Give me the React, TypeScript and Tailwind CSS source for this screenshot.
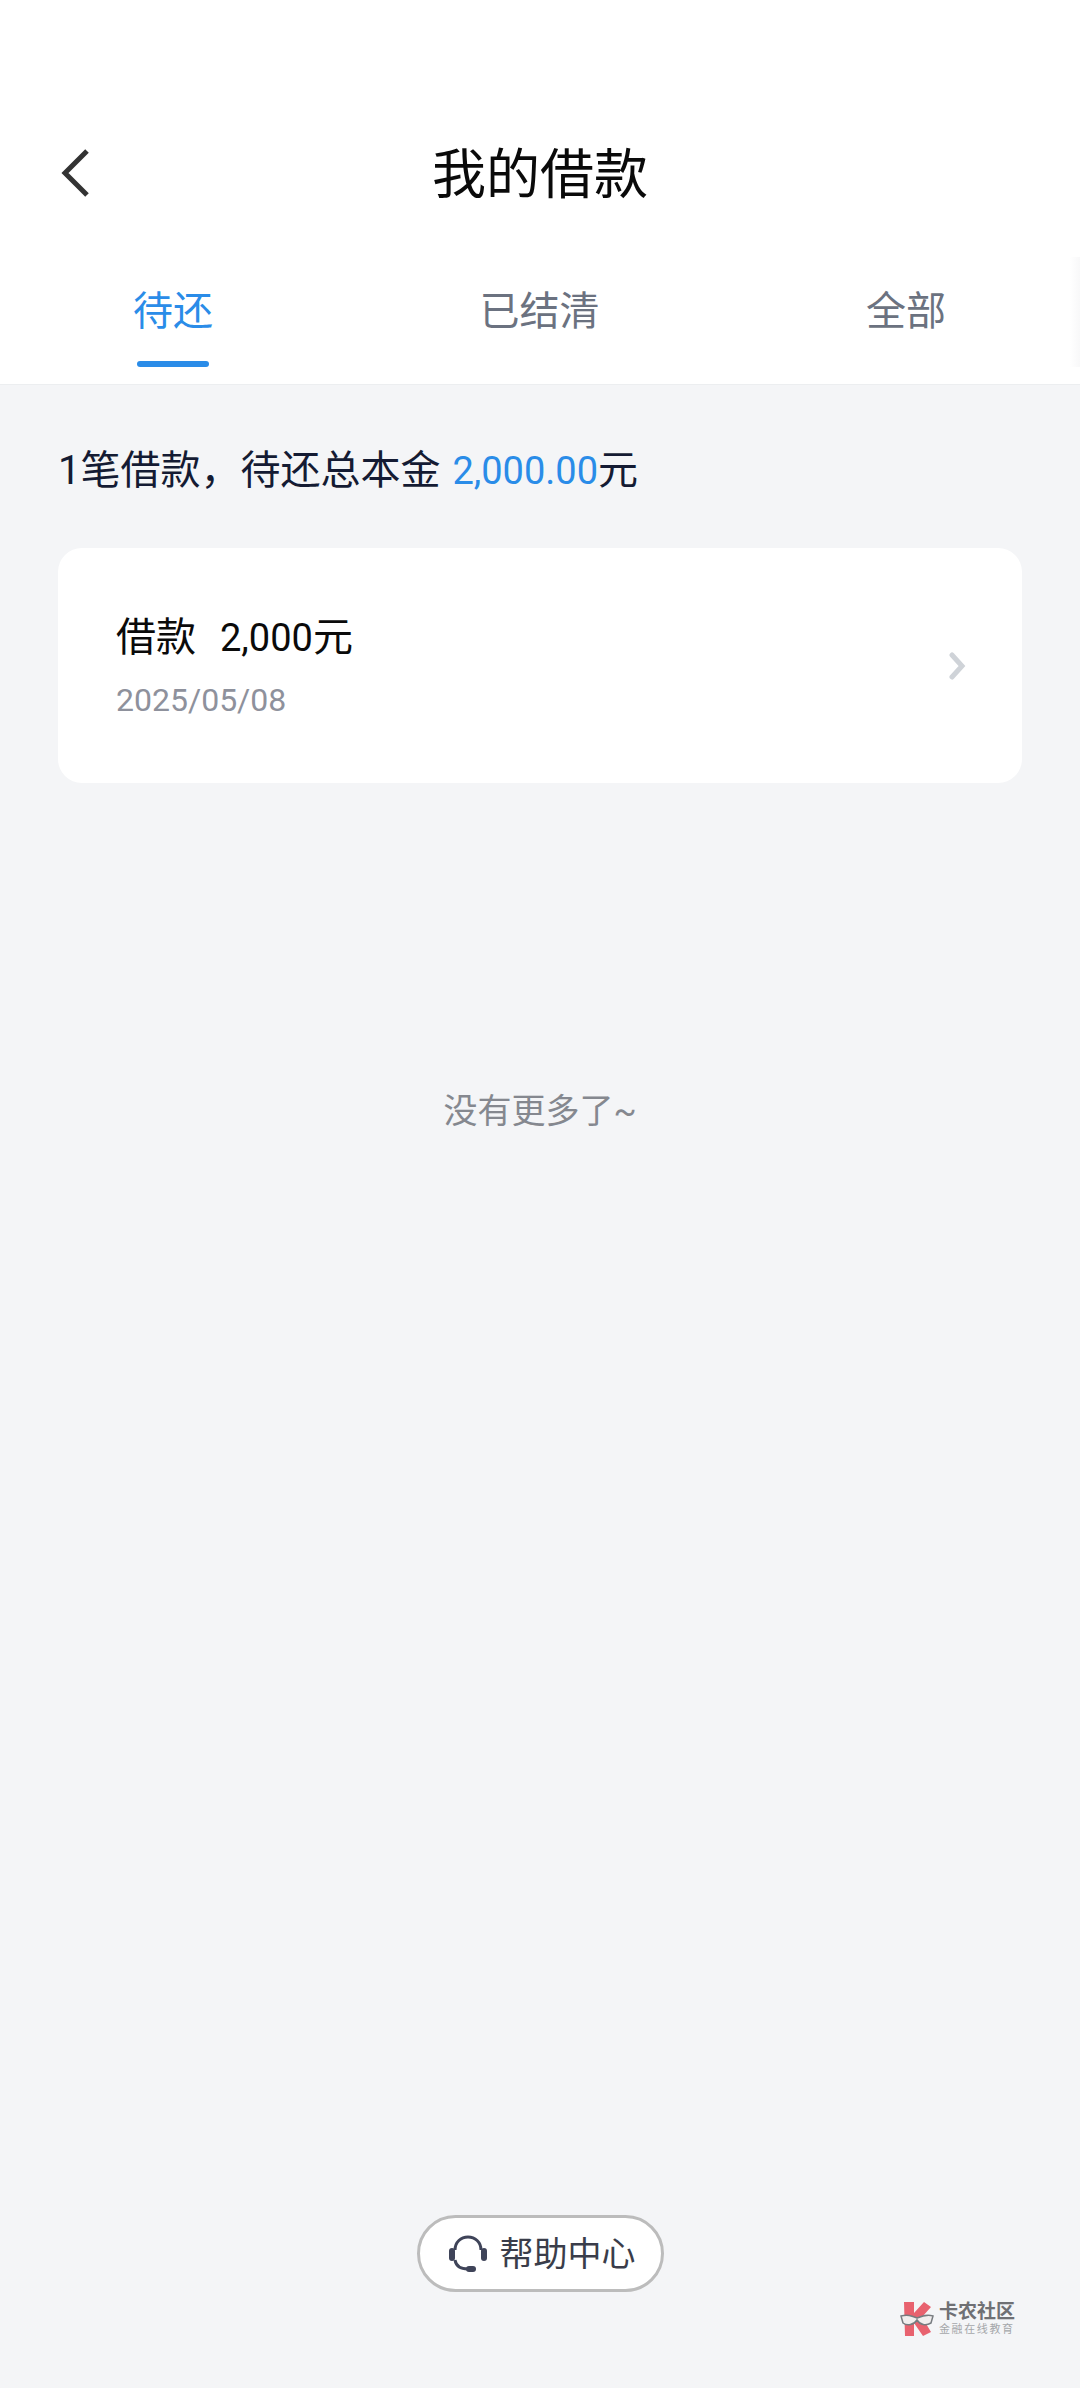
import React from 'react';

const FONT = "font-['Roboto','Noto_Sans_CJK_SC',sans-serif]";

const tabs = ['待还', '已结清', '全部'];

const App: React.FC = () => {
  return (
    <div className={`${FONT} relative flex min-h-[2388px] w-[1080px] flex-col overflow-hidden bg-[#f4f5f7]`}>
      <div className="relative border-b border-[#eceef0] bg-white pt-[136px]">
        {/* title bar */}
        <div className="relative flex h-[80px] items-center justify-center">
          <svg className="absolute left-[57px] top-[11px]" width="36" height="52" viewBox="0 0 36 52" fill="none">
            <path d="M30 4 L8 26 L30 48" stroke="#333333" strokeWidth="5" />
          </svg>
          <h1 className="text-[54px] font-normal leading-none text-[#0a0a0a]">我的借款</h1>
        </div>

        {/* tabs */}
        <div className="mt-[66px] flex h-[102px] justify-between pl-[133px] pr-[134px]">
          {tabs.map((t, i) => (
            <div key={t} className="relative">
              <span className={`text-[40px] leading-[60px] ${i === 0 ? 'text-[#2a8ce8]' : 'text-[#6b7280]'}`}>{t}</span>
              {i === 0 && <div className="absolute left-[4px] top-[79px] h-[6px] w-[72px] rounded-full bg-[#2a8ce8]" />}
            </div>
          ))}
        </div>

        {/* faint edge of the next tab page */}
        <div className="absolute right-0 top-[257px] h-[110px] w-[10px] bg-gradient-to-r from-white to-[#f8f8f9]" />
      </div>

      {/* summary */}
      <p className="ml-[58px] mt-[58px] text-[40px] leading-[56px] text-[#141b33]">
        1笔借款，待还总本金 <span className="ml-[2px] text-[38px] text-[#2a8ce8]">2,000.00</span>元
      </p>

      {/* loan card */}
      <div className="mx-[58px] mt-[49px] flex h-[235px] items-center justify-between rounded-[24px] bg-white pl-[58px] pr-[54px]">
        <div>
          <p className="mt-[3px] text-[40px] leading-[52px] text-[#0a0a0a]">
            借款<span className="ml-[24px] text-[38px]">2,000</span>元
          </p>
          <p className="mt-[14px] text-[32px] leading-[44px] text-[#8e919c]">2025/05/08</p>
        </div>
        <svg width="20" height="28" viewBox="0 0 20 28" fill="none">
          <path d="M4 3 L14 14 L4 25" stroke="#cfd3d8" strokeWidth="5" strokeLinecap="round" />
        </svg>
      </div>

      <p className="mt-[304px] text-center text-[34px] leading-[48px] text-[#85888f]">没有更多了~</p>

      {/* help button */}
      <div className="mt-auto mb-[96px] flex justify-center">
        <div className="flex h-[77px] w-[247px] items-center gap-[12px] rounded-full border-[3px] border-[#bcbcbc] bg-white pl-[28px]">
          <svg width="40" height="38" viewBox="0 0 40 38" fill="none">
            <path d="M7 15 C7 7 13 2 20 2 C27 2 33 7 33 15" stroke="#3f4459" strokeWidth="3" />
            <rect x="1" y="13" width="6" height="13" rx="3" fill="#3f4459" />
            <rect x="33" y="13" width="6" height="13" rx="3" fill="#3f4459" />
            <path d="M7 25 C8 31 13 34 20 34" stroke="#3f4459" strokeWidth="3" />
            <rect x="18" y="31" width="10" height="6" rx="3" fill="#3f4459" />
          </svg>
          <span className="text-[34px] leading-none text-[#3a3d4a]">帮助中心</span>
        </div>
      </div>

      {/* watermark */}
      <div className="absolute left-[900px] top-[2301px] flex items-center gap-[5px]">
        <svg width="34" height="36" viewBox="0 0 34 36">
          <path d="M4 1 H14 V12 L24 1 L31 6 L22 16 L31 31 L23 35 L14 22 V35 H5 Z" fill="#e8626f" />
          <path d="M1 15 C8 13 12 15 17 17 C22 15 27 13 33 15 L31 22 C26 25 20 24 17 19 C14 24 7 25 3 22 Z" fill="#f1eeee" stroke="#777c80" strokeWidth="1.5" />
        </svg>
        <div className="flex flex-col">
          <span className="text-[19px] font-bold leading-[22px] text-[#6f7074]">卡农社区</span>
          <span className="text-[11px] leading-[14px] tracking-[1.6px] text-[#a5a7aa]">金融在线教育</span>
        </div>
      </div>
    </div>
  );
};

export default App;
